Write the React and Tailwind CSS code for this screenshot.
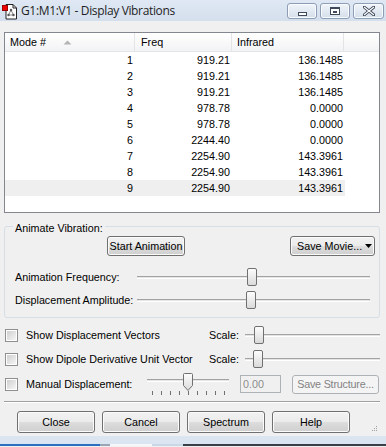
import React from "react";

const rows = [
  [1, "919.21", "136.1485"],
  [2, "919.21", "136.1485"],
  [3, "919.21", "136.1485"],
  [4, "978.78", "0.0000"],
  [5, "978.78", "0.0000"],
  [6, "2244.40", "0.0000"],
  [7, "2254.90", "143.3961"],
  [8, "2254.90", "143.3961"],
  [9, "2254.90", "143.3961"],
];

function Btn({ className = "", children }) {
  return (
    <div
      className={`flex items-center justify-center whitespace-nowrap rounded-[3px] border border-[#707070] bg-[linear-gradient(#f2f2f2,#ebebeb_50%,#dddddd_50%,#cfcfcf)] shadow-[inset_0_0_0_1px_#fbfbfb] text-black ${className}`}
    >
      {children}
    </div>
  );
}

function Track() {
  return (
    <div className="h-[3px] w-full border-t border-t-[#a3a3a3] border-b border-b-white bg-[#e4e4e4]" />
  );
}

function Thumb({ className = "" }) {
  return (
    <div
      className={`absolute w-[10px] h-[18px] rounded-[2px] border border-[#707070] bg-linear-to-b from-[#fdfdfd] to-[#dadada] ${className}`}
    />
  );
}

function Checkbox() {
  return (
    <div className="w-[13px] h-[13px] border border-[#8e8f8f] bg-white p-[1px]">
      <div className="w-full h-full bg-linear-to-br from-[#cfcfcf] to-[#f6f6f6]" />
    </div>
  );
}

function AppIcon() {
  return (
    <svg width="16" height="17" viewBox="0 0 16 17">
      <path d="M4 1.5h7l3.5 3.5v11H4z" fill="#fff" stroke="#222" />
      <path d="M11 1.5V5h3.5" fill="none" stroke="#222" />
      <line x1="9" y1="7" x2="6.5" y2="12" stroke="#888" />
      <line x1="9" y1="7" x2="11.5" y2="12" stroke="#888" />
      <line x1="6.5" y1="12" x2="11.5" y2="12" stroke="#888" />
      <circle cx="9" cy="7" r="1.2" fill="#555" />
      <circle cx="6.5" cy="12" r="1.2" fill="#555" />
      <circle cx="11.5" cy="12" r="1.2" fill="#555" />
      <rect x="0.5" y="2.5" width="5" height="5" fill="#e00" stroke="#900" />
    </svg>
  );
}

function CaptionBtn({ children, className = "" }) {
  return (
    <div
      className={`h-[16px] flex items-center justify-center rounded-[3px] border border-[#8d9db3] bg-linear-to-b from-[#f1f5fa] to-[#d4deea] shadow-[inset_0_0_0_1px_#f8fbff] ${className}`}
    >
      {children}
    </div>
  );
}

export default function App() {
  return (
    <div className="w-[386px] h-[447px] overflow-hidden bg-[#f0f0f0] font-['Liberation_Sans',Arial,sans-serif] text-[10.75px] text-black flex flex-col">
      {/* title bar */}
      <div className="h-[21px] shrink-0 flex items-center bg-linear-to-b from-[#dfe8f3] to-[#d4dfed]">
        <div className="ml-[2px] mt-[1px]">
          <AppIcon />
        </div>
        <span className="ml-[3px] text-[12px] text-[#1e1e1e] font-['Open_Sans',sans-serif] tracking-[-0.35px]">
          G1:M1:V1 - Display Vibrations
        </span>
        <div className="ml-auto mr-[2px] flex gap-[3px] mt-[1px]">
          <CaptionBtn className="w-[30px]">
            <div className="w-[9px] h-[4px] mt-[5px] border border-[#3f4a5a] bg-white" />
          </CaptionBtn>
          <CaptionBtn className="w-[30px]">
            <div className="w-[10px] h-[8px] border border-[#3f4a5a] border-t-2 bg-white flex items-center justify-center">
              <div className="w-[4px] h-[2px] border border-[#3f4a5a]" />
            </div>
          </CaptionBtn>
          <CaptionBtn className="w-[31px]">
            <svg width="12" height="10" viewBox="0 0 12 10">
              <path d="M1 1l10 8M11 1L1 9" stroke="#3f4a5a" strokeWidth="3" strokeLinecap="square" />
              <path d="M1 1l10 8M11 1L1 9" stroke="#fff" strokeWidth="1.2" />
            </svg>
          </CaptionBtn>
        </div>
      </div>

      {/* list view */}
      <div className="mt-[11px] ml-[4px] w-[376px] h-[181px] shrink-0 border border-[#828790] bg-white">
        <div className="h-[19px] flex bg-linear-to-b from-white to-[#f2f3f5] border-b border-[#e5e5e5]">
          <div className="w-[130px] flex items-center pl-[5px] border-r border-[#e3e4e6]">
            <span>Mode #</span>
            <svg className="ml-[17px]" width="9" height="5" viewBox="0 0 9 5">
              <path d="M0.5 4.5L4.5 0.5L8.5 4.5z" fill="#b4b4b4" />
            </svg>
          </div>
          <div className="w-[97px] flex items-center pl-[6px] border-r border-[#e3e4e6]">Freq</div>
          <div className="w-[112px] flex items-center pl-[5px] border-r border-[#e3e4e6]">Infrared</div>
          <div className="flex-1" />
        </div>
        {rows.map(([m, f, ir]) => (
          <div
            key={m}
            className={`h-[16px] w-[340px] flex items-center ${m === 9 ? "bg-[#efefef]" : ""}`}
          >
            <div className="w-[128px] text-right">{m}</div>
            <div className="w-[97px] text-right">{f}</div>
            <div className="w-[113px] text-right">{ir}</div>
          </div>
        ))}
      </div>

      {/* group box */}
      <div className="relative mt-[13px] ml-[4px] w-[376px] shrink-0 rounded-[3px] border border-[#d5dfe5] pt-[9px] pb-[8px]">
        <span className="absolute -top-[7px] left-[8px] px-[2px] bg-[#f0f0f0]">Animate Vibration:</span>
        <div className="flex items-center">
          <Btn className="ml-[102px] w-[78px] h-[20px]">Start Animation</Btn>
          <Btn className="ml-auto mr-[4px] w-[85px] h-[20px] justify-start pl-[6px]">
            <span>Save Movie...</span>
            <svg className="ml-[3px]" width="7" height="4" viewBox="0 0 7 4">
              <path d="M0 0h7L3.5 4z" fill="#000" />
            </svg>
          </Btn>
        </div>
        <div className="mt-[12px] h-[18px] flex items-center pl-[10px]">
          <span className="w-[122px]">Animation Frequency:</span>
          <div className="relative w-[233px] h-[18px] flex items-center">
            <Track />
            <Thumb className="left-[110px] top-0" />
          </div>
        </div>
        <div className="mt-[5px] h-[18px] flex items-center pl-[10px]">
          <span className="w-[122px]">Displacement Amplitude:</span>
          <div className="relative w-[233px] h-[18px] flex items-center">
            <Track />
            <Thumb className="left-[109px] top-0" />
          </div>
        </div>
      </div>

      {/* checkbox rows */}
      <div className="mt-[8px] h-[18px] shrink-0 flex items-center pl-[5px]">
        <Checkbox />
        <span className="ml-[8px] w-[183px]">Show Displacement Vectors</span>
        <span className="w-[36px]">Scale:</span>
        <div className="relative w-[135px] h-[18px] flex items-center">
          <Track />
          <Thumb className="left-[9px] top-0" />
        </div>
      </div>
      <div className="mt-[6px] h-[18px] shrink-0 flex items-center pl-[5px]">
        <Checkbox />
        <span className="ml-[8px] w-[183px]">Show Dipole Derivative Unit Vector</span>
        <span className="w-[36px]">Scale:</span>
        <div className="relative w-[135px] h-[18px] flex items-center">
          <Track />
          <Thumb className="left-[8px] top-0" />
        </div>
      </div>
      <div className="mt-[7px] h-[18px] shrink-0 flex items-center pl-[5px]">
        <Checkbox />
        <span className="ml-[8px] w-[121px]">Manual Displacement:</span>
        <div className="relative w-[82px] h-[18px]">
          <div className="pt-[4px]">
            <Track />
          </div>
          <svg className="absolute left-[36px] -top-[2px]" width="10" height="18" viewBox="0 0 10 18">
            <defs>
              <linearGradient id="tg" x1="0" y1="0" x2="0" y2="1">
                <stop offset="0" stopColor="#fdfdfd" />
                <stop offset="1" stopColor="#dadada" />
              </linearGradient>
            </defs>
            <path d="M0.5 1.5Q0.5 0.5 1.5 0.5h7Q9.5 0.5 9.5 1.5V12.5L5 17.5L0.5 12.5z" fill="url(#tg)" stroke="#707070" />
          </svg>
          <div className="absolute left-[5px] right-[4px] top-[16px] flex justify-between">
            {Array.from({ length: 9 }).map((_, i) => (
              <div key={i} className="w-px h-[4px] bg-[#707070]" />
            ))}
          </div>
        </div>
        <div className="ml-[11px] w-[41px] h-[18px] border border-[#adb2b5] flex items-center pl-[2px] text-[#8d8d8d]">
          0.00
        </div>
        <div className="ml-[11px] w-[87px] h-[19px] whitespace-nowrap rounded-[3px] border border-[#adb2b5] bg-[#f4f4f4] flex items-center justify-center text-[#838383] tracking-[-0.2px]">
          Save Structure...
        </div>
      </div>

      {/* separator */}
      <div className="mt-[8px] ml-[4px] w-[376px] h-[2px] shrink-0 border-t border-[#a0a0a0] border-b border-b-white" />

      {/* bottom buttons */}
      <div className="mt-[8px] h-[22px] shrink-0 flex items-center pl-[17px] gap-[7px]">
        <Btn className="w-[78px] h-[22px]">Close</Btn>
        <Btn className="w-[78px] h-[22px]">Cancel</Btn>
        <Btn className="w-[78px] h-[22px]">Spectrum</Btn>
        <Btn className="w-[78px] h-[22px]">Help</Btn>
        <svg className="ml-auto mr-[8px] mt-[12px]" width="7" height="7" viewBox="0 0 7 7">
          {[
            [5, 0],
            [3, 2],
            [5, 2],
            [1, 4],
            [3, 4],
            [5, 4],
          ].map(([x, y]) => (
            <rect key={`${x}-${y}`} x={x} y={y + 1} width="1" height="1" fill="#a0a0a0" />
          ))}
        </svg>
      </div>

      {/* frame bottom + taskbar sliver */}
      <div className="mt-[3px] h-[8px] shrink-0 bg-[#dbe5f1]" />
      <div className="h-[2px] shrink-0 flex">
        <div className="w-[100px] bg-[#2c6fbf]" />
        <div className="w-[10px] bg-[#9aa6b3]" />
        <div className="w-[42px] bg-[#f5f7fa]" />
        <div className="w-[31px] bg-[#c9d7e6]" />
        <div className="flex-1 bg-[#3a3f47]" />
      </div>
    </div>
  );
}
